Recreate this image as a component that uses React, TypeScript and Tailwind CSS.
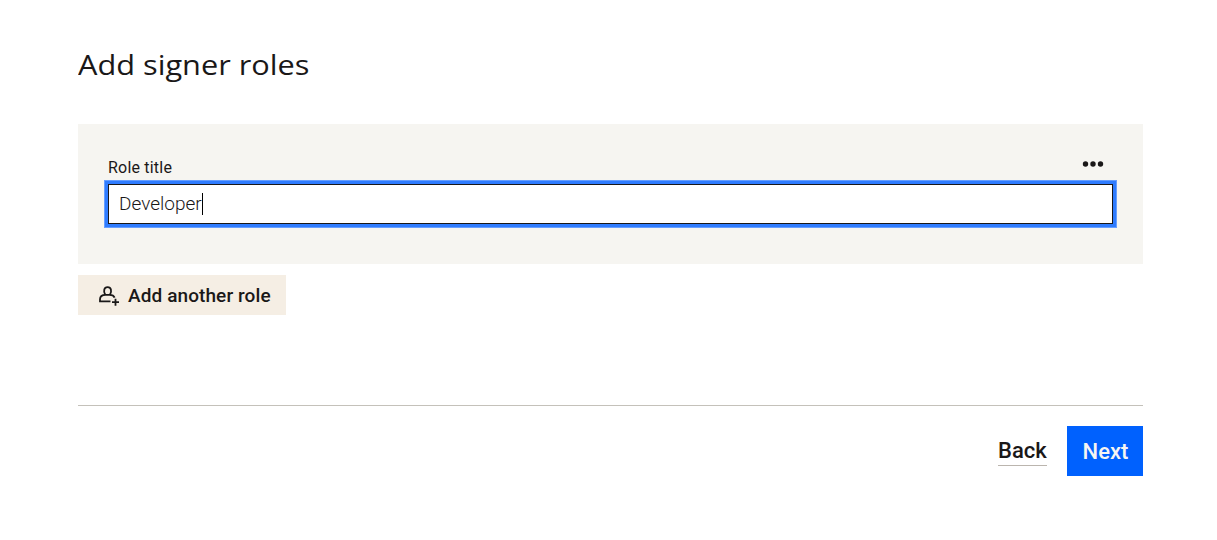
function AddRoleIcon() {
  return (
    <svg className="h-6 w-6" viewBox="0 0 24 24" fill="none" stroke="currentColor" strokeWidth="1.8">
      <path d="M14.5 18.4H4V16.2C4 13.2 6.2 11.8 9.6 11.8H13.6C16.4 11.8 18 12.9 18.6 14.6" />
      <path d="M9.2 11.6C7.9 9.9 7.9 8.1 8.3 6.5C8.7 4.9 9.8 4.1 11.6 4.1S14.5 4.9 14.9 6.5C15.3 8.1 15.3 9.9 14 11.6" />
      <path d="M19.5 15.7V22.7M16 19.2H23" />
    </svg>
  );
}

function MoreIcon() {
  return (
    <svg className="h-6 w-6" viewBox="0 0 24 24" fill="currentColor">
      <circle cx="4.5" cy="12" r="2.7" />
      <circle cx="12" cy="12" r="2.7" />
      <circle cx="19.5" cy="12" r="2.7" />
    </svg>
  );
}

export default function App() {
  return (
    <main className="h-[540px] bg-white px-[78px] pt-[46px] font-[Roboto,sans-serif] text-[#1a1818]">
      <div className="w-[1065px]">
        <h1 className="h-[78px] whitespace-nowrap font-['Open_Sans',sans-serif] text-[27px] leading-[38px]">
          <span className="inline-block origin-left scale-x-[1.138]">Add signer roles</span>
        </h1>

        {/* Role card */}
        <section className="h-[140px] bg-[#f6f5f1] px-[30px] pt-7">
          <div className="flex h-8 justify-between">
            <label className="pt-1 text-[16px] font-[450] leading-6 tracking-[0.2px]">
              <span>Role title</span>
            </label>
            <button type="button" aria-label="More options" className="mr-2 h-6">
              <MoreIcon />
            </button>
          </div>
          <div className="flex h-10 items-center border border-[#1a1818] bg-white px-[10px] shadow-[0_0_0_3px_#2f7cff,0_0_0_4px_#669eff]">
            <span className="text-[19px] font-[350] leading-6">Developer</span>
            <span className="-mt-px h-[22px] w-px bg-black" />
          </div>
        </section>

        <button type="button" className="mt-[11px] flex h-10 w-[208px] items-center whitespace-nowrap bg-[#f5eee4] pl-[18px]">
          <AddRoleIcon />
          <span className="ml-2 pt-px text-[19px] font-medium leading-6 tracking-[0.1px]">Add another role</span>
        </button>

        {/* Footer */}
        <footer className="mt-[90px] flex items-start justify-end gap-5 border-t border-[#c4c1ba] pt-5">
          <a href="#" className="mt-[10px] h-[30px] w-[49px] border-b border-[#bbb5ae] text-[22px] font-medium leading-[30px]">
            <span>Back</span>
          </a>
          <button type="button" className="h-[50px] w-[76px] bg-[#0061fe] pl-px text-[22px] font-medium text-[#f7f5f2]">
            <span>Next</span>
          </button>
        </footer>
      </div>
    </main>
  );
}
